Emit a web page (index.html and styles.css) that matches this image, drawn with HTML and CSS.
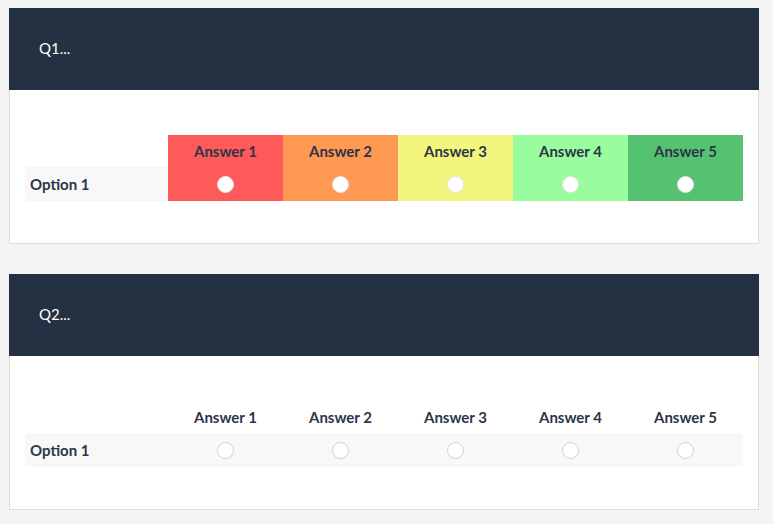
FILE: index.html
```html
<!DOCTYPE html>
<html>
<head>
<meta charset="utf-8">
<link rel="stylesheet" href="styles.css">
</head>
<body>
<div class="page">
  <section class="panel">
    <div class="panel-head">Q1...</div>
    <div class="panel-body">
      <table class="matrix colored">
        <thead>
          <tr>
            <th class="label-col"></th>
            <th class="c1">Answer 1</th>
            <th class="c2">Answer 2</th>
            <th class="c3">Answer 3</th>
            <th class="c4">Answer 4</th>
            <th class="c5">Answer 5</th>
          </tr>
        </thead>
        <tbody>
          <tr>
            <td class="label-col">Option 1</td>
            <td class="c1"><span class="radio"></span></td>
            <td class="c2"><span class="radio"></span></td>
            <td class="c3"><span class="radio"></span></td>
            <td class="c4"><span class="radio"></span></td>
            <td class="c5"><span class="radio"></span></td>
          </tr>
        </tbody>
      </table>
    </div>
  </section>
  <section class="panel">
    <div class="panel-head">Q2...</div>
    <div class="panel-body">
      <table class="matrix">
        <thead>
          <tr>
            <th class="label-col"></th>
            <th>Answer 1</th>
            <th>Answer 2</th>
            <th>Answer 3</th>
            <th>Answer 4</th>
            <th>Answer 5</th>
          </tr>
        </thead>
        <tbody>
          <tr class="striped">
            <td class="label-col">Option 1</td>
            <td><span class="radio"></span></td>
            <td><span class="radio"></span></td>
            <td><span class="radio"></span></td>
            <td><span class="radio"></span></td>
            <td><span class="radio"></span></td>
          </tr>
        </tbody>
      </table>
    </div>
  </section>
</div>
</body>
</html>
```

FILE: styles.css
```css
html, body {
  margin: 0;
  padding: 0;
  background: #f4f4f4;
}
body {
  font-family: Lato, "Open Sans", sans-serif;
  color: #2b3648;
}
.page {
  padding: 8px 0 0 9px;
  width: 750px;
  display: flex;
  flex-direction: column;
  gap: 30px;
}
.panel {
  background: #fff;
}
.panel-head {
  background: #233142;
  color: #fff;
  height: 82px;
  box-sizing: border-box;
  padding: 0 30px 2px 30px;
  display: flex;
  align-items: center;
  font-size: 15px;
}
.panel-body {
  border: 1px solid #dcdcdc;
  border-top: none;
  padding: 45px 15px 42px 15px;
}
.matrix {
  border-collapse: collapse;
  width: 718px;
  table-layout: fixed;
}
.matrix th, .matrix td {
  padding: 0;
  text-align: center;
  font-size: 15px;
  font-weight: 700;
  color: #2b3648;
}
.matrix th {
  height: 32px;
  width: 115px;
  padding-bottom: 1px;
  box-sizing: border-box;
}
.matrix th.label-col {
  width: 143px;
}
.matrix td {
  height: 34px;
}
.matrix tbody td.label-col {
  text-align: left;
  padding-left: 5px;
  background: #f8f8f8;
}
.matrix .striped td {
  background: #f8f8f8;
}
.radio {
  display: inline-block;
  width: 17px;
  height: 17px;
  box-sizing: border-box;
  border-radius: 50%;
  background: #fff;
  border: 1px solid #cfcfcf;
  vertical-align: middle;
  margin: -3px 0 0 -1px;
}
.colored .radio {
  border-color: #e4e4e4;
}
.colored .c1 { background: #ff5a5a; }
.colored .c2 { background: #fe9853; }
.colored .c3 { background: #f3f67e; }
.colored .c4 { background: #99fd9f; }
.colored .c5 { background: #55c272; }
```
